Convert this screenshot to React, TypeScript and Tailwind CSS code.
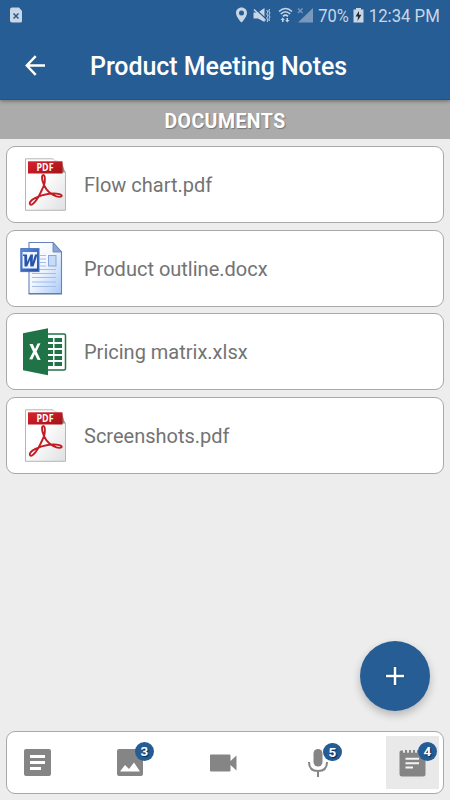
import React from 'react';

function PdfIcon() {
  return (
    <svg width="44" height="54" viewBox="0 0 44 54" className="block">
      <defs>
        <linearGradient id="pdfPage" x1="0" y1="0" x2="1" y2="1">
          <stop offset="0.4" stopColor="#ffffff" />
          <stop offset="1" stopColor="#dfe0e2" />
        </linearGradient>
        <linearGradient id="pdfBand" x1="0" y1="0" x2="1" y2="1">
          <stop offset="0" stopColor="#d8232a" />
          <stop offset="1" stopColor="#a31217" />
        </linearGradient>
      </defs>
      <path d="M2.500 .8H30L42.500 14V52.300H2.500Z" fill="url(#pdfPage)" stroke="#b5b6b7" />
      <path d="M29 .8L42.500 14H38V4Z" fill="#dedede" />
      <path d="M39 4L42 14.500H39Z" fill="#9b8080" />
      <rect x="5" y="3.300" width="34.500" height="12.200" fill="url(#pdfBand)" />
      <text x="22" y="13.200" textAnchor="middle" fill="#fff" fontSize="10" fontWeight="700" fontFamily="Open Sans, sans-serif" textLength="17" lengthAdjust="spacingAndGlyphs">PDF</text>
      <path d="M21.700 24Q22.400 17 20.300 17C17.400 17.300 19.800 26.500 23.500 31.300C26.500 35.300 33.500 39.700 37.500 38.700C41.800 37 34 34.500 26 35.700C20.300 36.500 15.800 38.100 12 40.100C7.300 42.500 6.100 45.100 7 46.300C9.700 48.500 15 40.300 17.600 34.600C20 29.500 21.500 27 21.700 24" fill="none" stroke="#c41c24" strokeWidth="1.900" />
    </svg>
  );
}

function WordIcon() {
  return (
    <svg width="44" height="54" viewBox="0 0 44 54" className="block">
      <defs>
        <linearGradient id="docPage" x1="0" y1="0" x2="1" y2="1">
          <stop offset="0" stopColor="#ffffff" />
          <stop offset="0.45" stopColor="#f3f8ff" />
          <stop offset="1" stopColor="#a9c8f7" />
        </linearGradient>
        <linearGradient id="docMark" x1="0" y1="0" x2="1" y2="1">
          <stop offset="0" stopColor="#5d8de0" />
          <stop offset="1" stopColor="#214fa7" />
        </linearGradient>
      </defs>
      <path d="M9 1.500H33L41.500 11V52.500H9Z" fill="url(#docPage)" stroke="#6882bd" strokeWidth="1.100" />
      <path d="M33 1.500V11H41.500Z" fill="#8ba6d2" stroke="#617db0" strokeWidth=".8" />
      <path d="M8.500 53H42" stroke="#647594" />
      <path d="M20 14.500H26M20 18H26M20 21.500H26M20 25H26M12 28.500H36M12 32.500H36M12 36.500H36M12 41H36M12 45.500H36" stroke="#a3bce8" strokeWidth="1.200" />
      <rect x="28.500" y="14.500" width="7.500" height="10.500" fill="#c8dcf7" stroke="#87a5d8" />
      <rect x=".8" y="7.600" width="18.200" height="23" fill="url(#docMark)" stroke="#4974bd" />
      <rect x="2.500" y="11" width="14.500" height="16.500" fill="#edf4ff" />
      <path d="M3 13.500H7L7.200 21L10.500 13.500H13L12.700 21L15 13.500H17.500L13.500 25.500H10.300L10 19L7.200 25.500H4.500L4.300 15H3Z" fill="#2854aa" />
    </svg>
  );
}

function ExcelIcon() {
  return (
    <svg width="44" height="48" viewBox="0 0 44 48" className="block">
      <rect x="21" y="6" width="21.500" height="36" rx="1.500" fill="#fff" stroke="#207347" strokeWidth="1.500" />
      <path d="M24 10h6v4h-6zm7.500 0H39v4h-7.500zM24 16h6v4h-6zm7.500 0H39v4h-7.500zM24 22h6v4h-6zm7.500 0H39v4h-7.500zM24 28h6v4h-6zm7.500 0H39v4h-7.500zM24 34h6v4h-6zm7.500 0H39v4h-7.500z" fill="#207347" />
      <path d="M0 5.300L25 .3V47.300L0 42.300Z" fill="#207347" />
      <path d="M6.400 16H9.700L12 21L14.500 15.500L17.500 15.200L13.600 23.500L17.700 32L14.400 31.800L11.800 26.300L9.300 31.600L6.200 31.300L10.100 23.700Z" fill="#fff" />
    </svg>
  );
}

const files = [
  { name: 'Flow chart.pdf', icon: <PdfIcon />, pad: 'pl-[16px]' },
  { name: 'Product outline.docx', icon: <WordIcon />, pad: 'pl-[13px]' },
  { name: 'Pricing matrix.xlsx', icon: <ExcelIcon />, pad: 'pl-[16px]' },
  { name: 'Screenshots.pdf', icon: <PdfIcon />, pad: 'pl-[16px]' },
];

function StatusBar() {
  return (
    <div className="flex h-[32px] items-center text-[#c9d6e5]">
      <svg width="450" height="32" viewBox="0 0 450 32" fill="currentColor" className="block">
        <path d="M12 7.500H19L22 11V21Q22 22.500 20.500 22.500H12Q10 22.500 10 20.500V9.500Q10 7.500 12 7.500Z" />
        <path d="M13.500 13.500L18.500 18.500M18.500 13.500L13.500 18.500" stroke="#245c94" strokeWidth="1.500" />
        <path fillRule="evenodd" d="M241.500 7.500C238.300 7.500 236 9.900 236 12.900C236 17 241.500 22.500 241.500 22.500S247 17 247 12.900C247 9.900 244.700 7.500 241.500 7.500ZM241.500 10.500A2.500 2.500 0 1 1 241.500 15.500A2.500 2.500 0 1 1 241.500 10.500Z" />
        <path d="M253.500 12.500H258L264.500 8V22L258 18.500H253.500Z" />
        <path d="M255 8.500L266 19" stroke="#265d95" strokeWidth="1.400" />
        <path d="M254 9.500L265.500 20.500" stroke="currentColor" strokeWidth="1.600" />
        <path d="M266.700 10L268 12L266.700 14L268 16L266.700 18L268 20L267 22M269.500 9L268.800 11L270 13L268.800 15L270 17L268.800 19L269.500 21" fill="none" stroke="currentColor" strokeWidth="1" />
        <path d="M279 11.500Q285.500 5.500 292 11.500M280.800 14Q285.500 9.500 290.200 14M283 16.300Q285.500 14 288 16.300" fill="none" stroke="currentColor" strokeWidth="1.600" />
        <path d="M282.700 17.500L284.800 20H283.500V22H282V20H280.700ZM286.500 18H288V20H289.500L287.300 22.500L285.200 20H286.500Z" />
        <path d="M313 8V22.500H298Z" opacity=".5" />
        <path d="M298 8.500L302.500 13M302.500 8.500L298 13" stroke="#7596ba" strokeWidth="1.500" />
        <text x="318.300" y="22" fontSize="19" fontFamily="Roboto, sans-serif" textLength="30.500" lengthAdjust="spacingAndGlyphs">70%</text>
        <path d="M356 8H361V9.500H363.500V22.500H353.500V9.500H356Z" />
        <path d="M359 11L355.500 16.500H358L357.500 21L361.500 14.800H359Z" fill="#242d36" />
        <text x="368.800" y="22" fontSize="19" fontFamily="Roboto, sans-serif" textLength="71" lengthAdjust="spacingAndGlyphs">12:34 PM</text>
      </svg>
    </div>
  );
}

function Badge({ count, position }: { count: number; position: string }) {
  return (
    <span className={`absolute flex h-[18.500px] w-[18.500px] items-center justify-center rounded-full bg-[#245c94] pt-px text-[13.500px] font-bold leading-none text-white [text-shadow:1px_1px_1px_#0a2341] ${position}`}>
      {count}
    </span>
  );
}

export default function App() {
  return (
    <div className="flex h-[800px] w-[450px] flex-col overflow-hidden bg-[#ededed] font-['Roboto',sans-serif]">
      <header className="z-10 h-[100px] shrink-0 border-b border-[#1b568d] bg-[#265d95] shadow-[0_1px_4px_rgba(0,0,0,.4)]">
        <StatusBar />
        <div className="flex h-[67px] items-center pl-[25px]">
          <svg width="21" height="22" viewBox="0 0 21 22" fill="none" stroke="white" strokeWidth="2.400" className="shrink-0">
            <path d="M20 10.500H2M10.700 1.200L1.800 10.500L10.700 19.800" />
          </svg>
          <h1 className="ml-[44px] whitespace-nowrap pt-[2px] text-[25px] font-medium leading-[34px] tracking-[-0.060px] text-white">Product Meeting Notes</h1>
        </div>
      </header>
      <h2 className="flex h-[39px] shrink-0 items-center justify-center bg-[#ababab] pt-[4px] text-[19.500px] font-bold tracking-[0.450px] text-white [text-shadow:1px_1px_1px_#777]">DOCUMENTS</h2>
      <main className="flex flex-col gap-[6.700px] px-[6px] pt-[7px]">
        {files.map((file) => (
          <div key={file.name} className="flex h-[77px] items-center rounded-[9px] border-[1.500px] border-[#a9a9a9] bg-white">
            <div className={`flex w-[77px] shrink-0 ${file.pad}`}>{file.icon}</div>
            <span className="pt-px text-[20px] leading-[28px] text-[#737373]">{file.name}</span>
          </div>
        ))}
      </main>
      <button className="mb-[20px] mr-[20px] mt-auto flex h-[70px] w-[70px] shrink-0 items-center justify-center self-end rounded-full bg-[#265d95] shadow-[0_4px_9px_rgba(0,0,0,.24)]" aria-label="Add">
        <svg width="20" height="20" viewBox="0 0 20 20" className="drop-shadow-[0_0_1px_#07386b]">
          <path d="M10 1V19M1 10H19" stroke="white" strokeWidth="2.500" />
        </svg>
      </button>
      <nav className="mx-[6px] mb-[6px] flex h-[63px] shrink-0 items-center rounded-[9px] border-[1.500px] border-[#a9a9a9] bg-white pl-[17px] pr-[4px] text-[#858585]">
        <svg width="27" height="27" viewBox="0 0 27 27" fill="currentColor"><path fillRule="evenodd" d="M2 0H25Q27 0 27 2V25Q27 27 25 27H2Q0 27 0 25V2Q0 0 2 0ZM6 6V9H21V6ZM6 12V15H21V12ZM6 18V21H17V18Z" /></svg>
        <div className="relative ml-[66px]">
          <svg width="26" height="27" viewBox="0 0 26 27" fill="currentColor" className="block"><path fillRule="evenodd" d="M2 0H24Q26 0 26 2V25Q26 27 24 27H2Q0 27 0 25V2Q0 0 2 0ZM3 22.500H23L17 13.500L12 20L8 16Z" /></svg>
          <Badge count={3} position="-top-[7px] left-[18px]" />
        </div>
        <svg className="ml-[67px]" width="27" height="18" viewBox="0 0 27 18" fill="currentColor"><path d="M0 1Q0 .5 1 .5H19.500Q20.500 .5 20.500 1.500V7L26.500 1.500V16.500L20.500 11V16.500Q20.500 17.500 19.500 17.500H1Q0 17.500 0 16.500Z" /></svg>
        <div className="relative ml-[71px]">
          <svg width="20" height="28" viewBox="0 0 20 28" fill="none" stroke="currentColor" className="block"><rect x="5.500" y="0" width="9" height="17.500" rx="4.500" fill="currentColor" stroke="none" /><path d="M1 13Q1 22 10 22Q19 22 19 13M10 21.500V28" strokeWidth="2" /></svg>
          <Badge count={5} position="-top-[6px] left-[15px]" />
        </div>
        <div className="relative ml-auto flex h-[53px] w-[53px] items-center justify-center bg-[#e9e9e9]">
          <svg width="27" height="28" viewBox="0 0 27 28"><path d="M2.500 1H24Q26.500 1 26.500 3.500V25Q26.500 27.500 24 27.500H3Q.5 27.500 .5 25V3.500Q.5 1 2.500 1Z" fill="#858585" /><path d="M0 0H4V1.500H0ZM4 0H6V2.500Q6 4 5 4Q4 4 4 2.500ZM8 0H10V2.500Q10 4 9 4Q8 4 8 2.500ZM12 0H14V2.500Q14 4 13 4Q12 4 12 2.500ZM16 0H18V2.500Q18 4 17 4Q16 4 16 2.500Z" fill="#e9e9e9" /><path d="M6.500 9.800H20M6.500 14.200H20M6.500 18.500H14" stroke="#f4f4f4" strokeWidth="1.900" /></svg>
          <Badge count={4} position="top-[6px] left-[32px]" />
        </div>
      </nav>
    </div>
  );
}
